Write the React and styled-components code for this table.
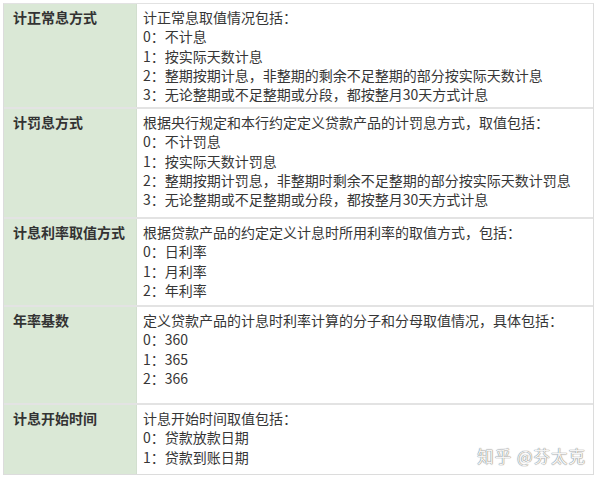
import React from "react";
import styled, { createGlobalStyle } from "styled-components";

const Global = createGlobalStyle`
  html, body { margin: 0; padding: 0; background: #fff; }
  body { font-family: "Noto Sans CJK SC", "Noto Sans", sans-serif; }
`;

const Page = styled.div`
  position: relative;
  width: 600px;
  height: 479px;
  padding: 3px 0 0 3px;
  box-sizing: border-box;
  overflow: hidden;
`;

const Table = styled.div`
  width: 591px;
  display: flex;
  flex-direction: column;
  border: 1px solid #dcdcdc;
  border-top: 1px solid #e2e2e2;
  box-sizing: border-box;
`;

const Row = styled.div`
  display: flex;
  height: ${(p) => p.$h}px;
  box-sizing: border-box;
  & + & {
    border-top: 2px solid #e3e3e3;
  }
`;

const Label = styled.div`
  width: 133px;
  flex: none;
  background: #dae8d6;
  border-right: 1px solid #d2dfcf;
  padding: 4px 0 0 9px;
  box-sizing: border-box;
  font-size: 14px;
  line-height: 19.3px;
  font-weight: 700;
  color: #333;
`;

const Content = styled.div`
  flex: 1;
  padding: 4px 0 0 6px;
  font-size: 14px;
  line-height: 19.3px;
  color: #363636;
  white-space: nowrap;
`;

const Line = styled.div``;

const Watermark = styled.div`
  position: absolute;
  right: 14px;
  bottom: 11px;
  font-size: 16.5px;
  color: #f4f4f4;
  letter-spacing: 1px;
  text-shadow: 0 0 1px #7a7a7a, 0 0 1px #8a8a8a;
`;

const rows = [
  {
    h: 103,
    label: "计正常息方式",
    lines: [
      "计正常息取值情况包括：",
      "0：不计息",
      "1：按实际天数计息",
      "2：整期按期计息，非整期的剩余不足整期的部分按实际天数计息",
      "3：无论整期或不足整期或分段，都按整月30天方式计息",
    ],
  },
  {
    h: 110,
    label: "计罚息方式",
    lines: [
      "根据央行规定和本行约定定义贷款产品的计罚息方式，取值包括：",
      "0：不计罚息",
      "1：按实际天数计罚息",
      "2：整期按期计罚息，非整期时剩余不足整期的部分按实际天数计罚息",
      "3：无论整期或不足整期或分段，都按整月30天方式计息",
    ],
  },
  {
    h: 88,
    label: "计息利率取值方式",
    lines: [
      "根据贷款产品的约定定义计息时所用利率的取值方式，包括：",
      "0：日利率",
      "1：月利率",
      "2：年利率",
    ],
  },
  {
    h: 98,
    label: "年率基数",
    lines: [
      "定义贷款产品的计息时利率计算的分子和分母取值情况，具体包括：",
      "0：360",
      "1：365",
      "2：366",
    ],
  },
  {
    h: 71,
    label: "计息开始时间",
    lines: ["计息开始时间取值包括：", "0：贷款放款日期", "1：贷款到账日期"],
  },
];

export default function App() {
  return (
    <Page>
      <Global />
      <Table>
        {rows.map((r) => (
          <Row key={r.label} $h={r.h}>
            <Label>{r.label}</Label>
            <Content>
              {r.lines.map((l, i) => (
                <Line key={i}>{l}</Line>
              ))}
            </Content>
          </Row>
        ))}
      </Table>
      <Watermark>知乎 @芬太克</Watermark>
    </Page>
  );
}
